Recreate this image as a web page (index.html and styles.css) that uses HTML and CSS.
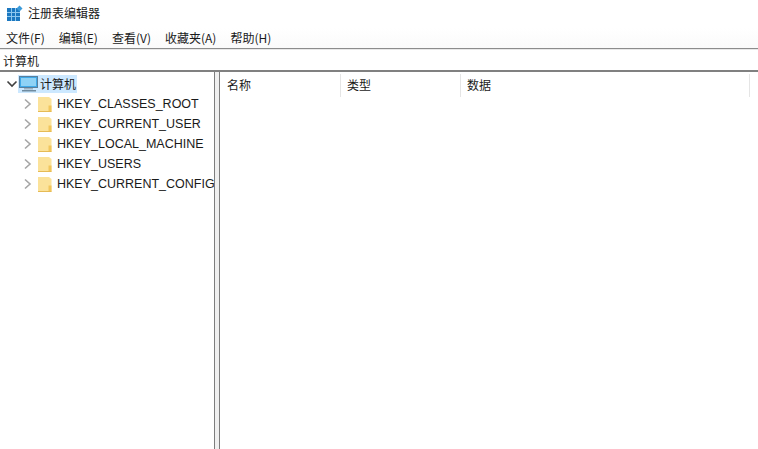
FILE: index.html
```html
<!DOCTYPE html>
<html lang="zh">
<head>
<meta charset="utf-8">
<title>注册表编辑器</title>
<link rel="stylesheet" href="styles.css">
</head>
<body>
<div class="app">
  <div class="titlebar">
    <svg class="app-icon" width="16" height="16" viewBox="0 0 16 16">
      <rect x="0" y="3" width="13" height="13" fill="#1c78c0"/>
      <path d="M4.5 3v13M8.5 3v13M0 7.5h13M0 11.5h13" stroke="#8fc8ee" stroke-width="1"/>
      <path d="M12.5 0.5l3 3-3 3-3-3z" fill="#3a9ad9"/>
    </svg>
    <span class="title">注册表编辑器</span>
  </div>
  <nav class="menubar">
    <span class="menu-item">文件(F)</span>
    <span class="menu-item">编辑(E)</span>
    <span class="menu-item">查看(V)</span>
    <span class="menu-item">收藏夹(A)</span>
    <span class="menu-item">帮助(H)</span>
  </nav>
  <div class="address">计算机</div>
  <div class="main">
    <div class="tree">
      <div class="row root">
        <svg class="chev" width="12" height="12" viewBox="0 0 12 12"><path d="M1.5 3.5L6 8l4.5-4.5" fill="none" stroke="#404040" stroke-width="1.6"/></svg>
        <span class="root-sel">
          <svg class="pc" width="19" height="18" viewBox="0 0 19 18">
            <rect x="0.5" y="1.5" width="18" height="11" fill="#3fa9e8" stroke="#5a7f9c"/>
            <rect x="2" y="3" width="15" height="8" fill="#8ed2f6"/>
            <rect x="5" y="13" width="9" height="1.5" fill="#9fb2c0"/>
            <rect x="3" y="15" width="14" height="1.5" fill="#6f8ba0"/>
          </svg>
          <span class="root-label">计算机</span>
        </span>
      </div>
      <div class="row key">
        <svg class="chev-r" width="12" height="12" viewBox="0 0 12 12"><path d="M3 1.5L8 6l-5 4.5" fill="none" stroke="#a6a6a6" stroke-width="1.6"/></svg>
        <svg class="folder" width="14" height="16" viewBox="0 0 14 16"><path d="M0 1h11l2.5 2v12.5H0z" fill="#fbe29a"/><path d="M10.5 15.5V9.5h3v6z" fill="#f2c75c"/><path d="M0 15.500h13.500" stroke="#e6bb55"/></svg>
        <span class="key-label">HKEY_CLASSES_ROOT</span>
      </div>
      <div class="row key">
        <svg class="chev-r" width="12" height="12" viewBox="0 0 12 12"><path d="M3 1.500L8 6l-5 4.500" fill="none" stroke="#a6a6a6" stroke-width="1.6"/></svg>
        <svg class="folder" width="14" height="16" viewBox="0 0 14 16"><path d="M0 1h11l2.500 2v12.500H0z" fill="#fbe29a"/><path d="M10.500 15.500V9.500h3v6z" fill="#f2c75c"/><path d="M0 15.500h13.500" stroke="#e6bb55"/></svg>
        <span class="key-label">HKEY_CURRENT_USER</span>
      </div>
      <div class="row key">
        <svg class="chev-r" width="12" height="12" viewBox="0 0 12 12"><path d="M3 1.500L8 6l-5 4.500" fill="none" stroke="#a6a6a6" stroke-width="1.6"/></svg>
        <svg class="folder" width="14" height="16" viewBox="0 0 14 16"><path d="M0 1h11l2.500 2v12.500H0z" fill="#fbe29a"/><path d="M10.500 15.500V9.500h3v6z" fill="#f2c75c"/><path d="M0 15.500h13.500" stroke="#e6bb55"/></svg>
        <span class="key-label">HKEY_LOCAL_MACHINE</span>
      </div>
      <div class="row key">
        <svg class="chev-r" width="12" height="12" viewBox="0 0 12 12"><path d="M3 1.500L8 6l-5 4.500" fill="none" stroke="#a6a6a6" stroke-width="1.6"/></svg>
        <svg class="folder" width="14" height="16" viewBox="0 0 14 16"><path d="M0 1h11l2.500 2v12.500H0z" fill="#fbe29a"/><path d="M10.500 15.500V9.500h3v6z" fill="#f2c75c"/><path d="M0 15.500h13.500" stroke="#e6bb55"/></svg>
        <span class="key-label">HKEY_USERS</span>
      </div>
      <div class="row key">
        <svg class="chev-r" width="12" height="12" viewBox="0 0 12 12"><path d="M3 1.500L8 6l-5 4.500" fill="none" stroke="#a6a6a6" stroke-width="1.6"/></svg>
        <svg class="folder" width="14" height="16" viewBox="0 0 14 16"><path d="M0 1h11l2.500 2v12.500H0z" fill="#fbe29a"/><path d="M10.500 15.500V9.500h3v6z" fill="#f2c75c"/><path d="M0 15.500h13.500" stroke="#e6bb55"/></svg>
        <span class="key-label">HKEY_CURRENT_CONFIG</span>
      </div>
    </div>
    <div class="splitter"></div>
    <div class="list">
      <div class="list-head">
        <span class="col col-name">名称</span>
        <span class="col col-type">类型</span>
        <span class="col col-data">数据</span>
      </div>
    </div>
  </div>
</div>
</body>
</html>
```

FILE: styles.css
```css
* { box-sizing: border-box; }
html, body { margin: 0; height: 100%; background: #fff; overflow: hidden; }
body { font-family: "Noto Sans CJK SC", "Liberation Sans", sans-serif; font-size: 12px; color: #1a1a1a; }
.app { width: 758px; height: 449px; display: flex; flex-direction: column; }
.titlebar { height: 28px; display: flex; align-items: center; padding-left: 7px; gap: 5px; }
.app-icon { flex: none; margin-top: -2px; }
.title { font-size: 12px; line-height: 16px; margin-top: -2px; }
.menubar { height: 21px; display: flex; padding-left: 6px; gap: 14px; align-items: center; background: linear-gradient(#fff, #fafafa); border-bottom: 1px solid #8c8c8c; padding-bottom: 1px; }
.menu-item { font-size: 12px; line-height: 16px; }
.address { height: 23px; padding-left: 3px; font-size: 12px; line-height: 21px; border-top: 1px solid #e8e8e8; border-bottom: 2px solid #808080; }
.main { flex: 1; display: flex; min-height: 0; }
.tree { width: 214px; flex: none; padding-top: 2px; }
.row { height: 20px; display: flex; align-items: center; }
.root { padding-left: 6px; }
.chev { flex: none; }
.root-sel { display: flex; align-items: center; height: 18px; margin-left: 0; padding: 0 1px 0 1px; background: #cce8ff; }
.pc { flex: none; }
.root-label { font-size: 12px; margin-left: 2px; line-height: 16px; }
.key { padding-left: 22px; }
.chev-r { flex: none; }
.folder { flex: none; margin-left: 4px; }
.key-label { font-family: "Liberation Sans", sans-serif; font-size: 12.5px; margin-left: 5px; line-height: 16px; color: #1a1a1a; }
.splitter { width: 6px; flex: none; background: #efefef; border-left: 1px solid #7d7d7d; border-right: 1px solid #7d7d7d; }
.list { flex: 1; min-width: 0; }
.list-head { display: flex; height: 25px; padding-top: 2px; }
.col { display: block; height: 23px; line-height: 22px; font-size: 12px; padding-left: 7px; border-right: 1px solid #e5e5e5; }
.col-name { width: 121px; }
.col-type { width: 120px; padding-left: 6px; }
.col-data { width: 289px; padding-left: 6px; }
```
